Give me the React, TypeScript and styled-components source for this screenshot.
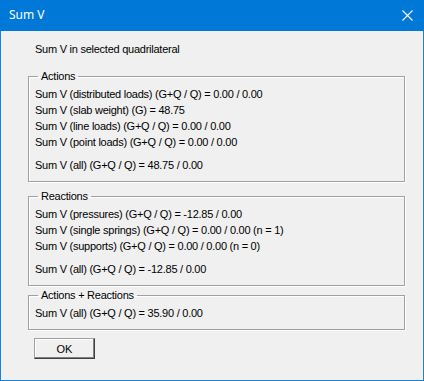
import React from "react";
import styled, { createGlobalStyle } from "styled-components";

const Global = createGlobalStyle`
  html, body { margin: 0; padding: 0; background: #f0f0f0; }
  body { font-family: "Liberation Sans", Arial, sans-serif; }
`;

const Window = styled.div`
  width: 424px;
  height: 381px;
  box-sizing: border-box;
  border: 1px solid #1883d7;
  border-top: none;
  background: #f0f0f0;
  display: flex;
  flex-direction: column;
`;

const TitleBar = styled.div`
  height: 31px;
  margin: 0 -1px;
  background: #0078d7;
  display: flex;
  align-items: center;
  justify-content: space-between;
  padding: 0 0 0 9px;
  color: #fff;
  font-family: "Noto Sans", "Liberation Sans", sans-serif;
  font-size: 12px;
  flex-shrink: 0;
`;

const TitleText = styled.span`
  line-height: 16px;
  padding-bottom: 1px;
`;

const CloseButton = styled.div`
  width: 34px;
  height: 31px;
  display: flex;
  align-items: center;
  justify-content: center;
`;

const Body = styled.div`
  padding: 10px 0 0 27px;
  font-size: 11px;
  letter-spacing: -0.25px;
  color: #000;
  display: flex;
  flex-direction: column;
  align-items: flex-start;
`;

const Heading = styled.div`
  line-height: 16px;
  padding-left: 7px;
  margin-bottom: 12px;
`;

const Group = styled.fieldset<{ $gap: number }>`
  margin: 0 0 ${(p) => p.$gap}px 0;
  width: 377px;
  box-sizing: border-box;
  border: 1px solid #a0a0a0;
  box-shadow: inset 1px 1px 0 #fff, 1px 1px 0 #fff;
  padding: 3px 0 8px 6px;
`;

const Legend = styled.legend`
  padding: 0 3px 0 3px;
  margin-left: 3px;
  line-height: 14px;
`;

const Row = styled.div<{ $extra?: boolean }>`
  line-height: 16px;
  white-space: pre;
  margin-top: ${(p) => (p.$extra ? 7 : 0)}px;
`;

const OkButton = styled.button`
  margin-left: 6px;
  margin-top: 8px;
  width: 61px;
  height: 21px;
  box-sizing: border-box;
  background: #f0f0f0;
  font-family: "Liberation Sans", Arial, sans-serif;
  font-size: 11px;
  color: #000;
  border: 1px solid;
  border-color: #a0a0a0 #404040 #404040 #a0a0a0;
  box-shadow: inset -1px -1px 0 #808080, inset 1px 1px 0 #fff;
  padding: 0;
`;

type GroupData = { title: string; rows: string[]; all: string; gap: number };

const groups: GroupData[] = [
  {
    title: "Actions",
    rows: [
      "Sum V (distributed loads) (G+Q / Q) = 0.00 / 0.00",
      "Sum V (slab weight) (G) = 48.75",
      "Sum V (line loads) (G+Q / Q) = 0.00 / 0.00",
      "Sum V (point loads) (G+Q / Q) = 0.00 / 0.00",
    ],
    all: "Sum V (all) (G+Q / Q) = 48.75 / 0.00",
    gap: 7,
  },
  {
    title: "Reactions",
    rows: [
      "Sum V (pressures) (G+Q / Q) = -12.85 / 0.00",
      "Sum V (single springs) (G+Q / Q) = 0.00 / 0.00 (n = 1)",
      "Sum V (supports) (G+Q / Q) = 0.00 / 0.00 (n = 0)",
    ],
    all: "Sum V (all) (G+Q / Q) = -12.85 / 0.00",
    gap: 2,
  },
  {
    title: "Actions + Reactions",
    rows: [],
    all: "Sum V (all) (G+Q / Q) = 35.90 / 0.00",
    gap: 0,
  },
];

export default function App() {
  return (
    <>
      <Global />
      <Window>
        <TitleBar>
          <TitleText>Sum V</TitleText>
          <CloseButton>
            <svg width="11" height="11" viewBox="0 0 11 11">
              <path d="M0.5 0.5 L10.5 10.5 M10.5 0.5 L0.5 10.5" stroke="#fff" strokeWidth="1.1" />
            </svg>
          </CloseButton>
        </TitleBar>
        <Body>
          <Heading>Sum V in selected quadrilateral</Heading>
          {groups.map((g) => (
            <Group key={g.title} $gap={g.gap}>
              <Legend>{g.title}</Legend>
              {g.rows.map((r) => (
                <Row key={r}>{r}</Row>
              ))}
              <Row $extra={g.rows.length > 0}>{g.all}</Row>
            </Group>
          ))}
          <OkButton>OK</OkButton>
        </Body>
      </Window>
    </>
  );
}
